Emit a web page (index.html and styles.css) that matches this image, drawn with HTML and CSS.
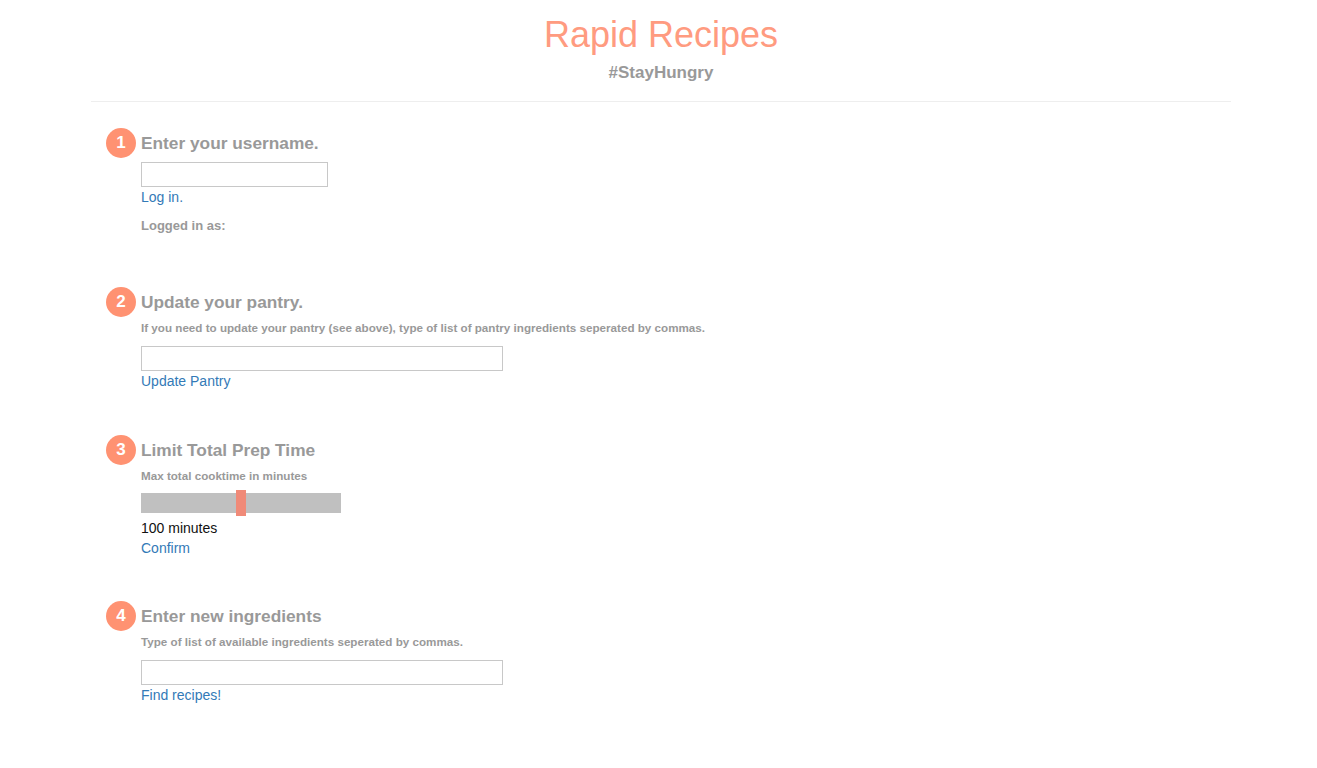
FILE: index.html
```html
<!DOCTYPE html>
<html lang="en">
<head>
<meta charset="utf-8">
<title>Rapid Recipes</title>
<link rel="stylesheet" href="styles.css">
</head>
<body>
<div class="container">
  <header class="header">
    <h1 class="title">Rapid Recipes</h1>
    <div class="tagline">#StayHungry</div>
  </header>
  <hr class="rule">

  <section class="step step-1">
    <div class="badge">1</div>
    <div class="step-body">
      <h2 class="step-title">Enter your username.</h2>
      <input class="field field-short" type="text">
      <a class="link" href="#">Log in.</a>
      <div class="logged">Logged in as:</div>
    </div>
  </section>

  <section class="step">
    <div class="badge">2</div>
    <div class="step-body">
      <h2 class="step-title">Update your pantry.</h2>
      <p class="hint">If you need to update your pantry (see above), type of list of pantry ingredients seperated by commas.</p>
      <input class="field field-long" type="text">
      <a class="link" href="#">Update Pantry</a>
    </div>
  </section>

  <section class="step">
    <div class="badge">3</div>
    <div class="step-body">
      <h2 class="step-title">Limit Total Prep Time</h2>
      <p class="hint">Max total cooktime in minutes</p>
      <div class="slider"><span class="thumb"></span></div>
      <div class="value">100 minutes</div>
      <a class="link" href="#">Confirm</a>
    </div>
  </section>

  <section class="step step-4">
    <div class="badge">4</div>
    <div class="step-body">
      <h2 class="step-title">Enter new ingredients</h2>
      <p class="hint">Type of list of available ingredients seperated by commas.</p>
      <input class="field field-long" type="text">
      <a class="link" href="#">Find recipes!</a>
    </div>
  </section>
</div>
</body>
</html>
```

FILE: styles.css
```css
html, body {
  margin: 0;
  padding: 0;
  background: #ffffff;
}

body {
  font-family: "Liberation Sans", Arial, Helvetica, sans-serif;
  color: #333333;
}

.container {
  width: 1140px;
  margin-left: calc(50% - 567.5px);
  padding-bottom: 40px;
}

.header {
  text-align: center;
  padding-top: 15px;
}

.title {
  margin: 0;
  font-size: 36px;
  line-height: 40px;
  font-weight: normal;
  color: #ff9b80;
}

.tagline {
  margin-top: 8px;
  font-size: 17px;
  line-height: 20px;
  font-weight: bold;
  color: #999999;
}

.rule {
  margin: 18px 0 0 0;
  border: 0;
  border-top: 1px solid #eeeeee;
  height: 0;
}

.step {
  display: flex;
  gap: 5px;
  padding-left: 15px;
  margin-top: 44px;
}

.step-1 {
  margin-top: 26px;
}

.step-4 {
  margin-top: 43px;
}

.badge {
  flex: 0 0 30px;
  width: 30px;
  height: 30px;
  border-radius: 50%;
  background: #ff9272;
  color: #ffffff;
  font-size: 17px;
  font-weight: bold;
  line-height: 30px;
  text-align: center;
}

.step-body {
  display: flex;
  flex-direction: column;
  align-items: flex-start;
}

.step-title {
  margin: 0;
  font-size: 17.3px;
  line-height: 30px;
  font-weight: bold;
  color: #999999;
}

.hint {
  margin: 3px 0 0 0;
  font-size: 11.65px;
  line-height: 16px;
  font-weight: bold;
  color: #999999;
}

.field {
  box-sizing: border-box;
  height: 25px;
  margin: 0;
  padding: 2px 4px;
  border: 1px solid #c8c8c8;
  border-radius: 0;
  background: #ffffff;
  font-family: inherit;
  font-size: 14px;
}

.field-short {
  width: 187px;
  margin-top: 4px;
}

.field-long {
  width: 362px;
  margin-top: 10px;
}

.link {
  font-size: 14px;
  line-height: 20px;
  color: #337ab7;
  text-decoration: none;
}

.logged {
  margin-top: 9px;
  margin-bottom: 7px;
  font-size: 13px;
  line-height: 20px;
  font-weight: bold;
  color: #999999;
}

.slider {
  position: relative;
  width: 200px;
  height: 20px;
  margin-top: 9px;
  background: #c0c0c0;
}

.thumb {
  position: absolute;
  left: 95px;
  top: -3px;
  width: 10px;
  height: 26px;
  background: #f08a78;
}

.value {
  margin-top: 5px;
  font-size: 14px;
  line-height: 20px;
  color: #111111;
}
```
